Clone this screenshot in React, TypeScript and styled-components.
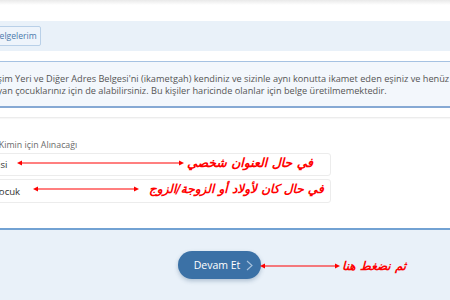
import React from 'react';
import styled, { createGlobalStyle } from 'styled-components';

const GlobalStyle = createGlobalStyle`
  html, body {
    margin: 0;
    padding: 0;
    width: 450px;
    height: 300px;
    overflow: hidden;
    background: #fff;
    font-family: 'Open Sans', 'Liberation Sans', sans-serif;
  }
`;

// the page is scrolled sideways: content starts left of the window
const Content = styled.div`
  margin-left: -60px;
  width: 570px;
`;

const TopShade = styled.div`
  height: 5px;
  background: linear-gradient(#e9e9e9, #fff);
`;

const Toolbar = styled.div`
  margin-top: 16px;
  height: 30px;
  background: #e9f1f9;
  display: flex;
  align-items: center;
  padding-left: 47px;
`;

const GhostButton = styled.button`
  height: 20px;
  padding: 0 3px 0 6px;
  border: 1px solid #b9d0e8;
  border-radius: 2px;
  background: #eef4fb;
  color: #4a79ab;
  font-family: inherit;
  font-size: 8.6px;
  line-height: 18px;
`;

const InfoBox = styled.div`
  margin-top: 10px;
  border-top: 1px solid #a6c2e2;
  border-bottom: 2px solid #86a9d4;
  background: #f3f7fc;
  padding: 11px 0 9px 36px;
  color: #555;
  font-size: 9.2px;
  line-height: 12px;
`;

const InfoLine = styled.div`
  white-space: nowrap;
`;

const Divider = styled.div`
  margin-top: 9px;
  height: 1px;
  background: #ececec;
  box-shadow: 0 1px 1px #f6f6f6;
`;

const FormSection = styled.div`
  padding: 20px 0 0 20px;
`;

const FieldLabel = styled.div<{ $indent: number }>`
  padding-left: ${p => p.$indent}px;
  color: #6b6b6b;
  font-size: 8.8px;
  line-height: 14px;
  margin-bottom: 1px;
  white-space: nowrap;
`;

const OptionList = styled.div`
  display: flex;
  flex-direction: column;
  gap: 3px;
  width: 371px;
`;

const OptionRow = styled.div<{ $indent: number; $h: number }>`
  position: relative;
  height: ${p => p.$h}px;
  border: 1px solid #ececec;
  border-radius: 3px;
  box-sizing: border-box;
  display: flex;
  align-items: center;
  padding-left: ${p => p.$indent}px;
  color: #333;
  font-size: 9.6px;
  white-space: nowrap;
`;

const Footer = styled.div`
  margin-top: 25px;
  border-top: 2px solid #72a2d3;
  background: #e9f1f9;
  height: 80px;
  padding: 21px 0 0 238px;
  position: relative;
`;

const PrimaryButton = styled.button`
  width: 83px;
  height: 28px;
  border: none;
  border-radius: 14px;
  background: #3b71a6;
  box-shadow: 0 2px 4px rgba(40, 80, 120, 0.3);
  color: #fff;
  font-family: inherit;
  font-size: 10.5px;
  display: flex;
  align-items: center;
  justify-content: center;
  gap: 6px;
  padding: 0 0 0 8px;
`;

const Note = styled.div<{ $left: number; $top: number; $gap: number }>`
  position: absolute;
  left: ${p => p.$left}px;
  top: ${p => p.$top}px;
  display: flex;
  align-items: center;
  gap: ${p => p.$gap}px;
`;

const NoteText = styled.span<{ $size: number }>`
  direction: rtl;
  color: #f00;
  font-family: 'DejaVu Sans', sans-serif;
  font-weight: bold;
  font-style: italic;
  font-size: ${p => p.$size}px;
  white-space: nowrap;
`;

const Arrow = ({ width }: { width: number }) => (
  <svg width={width} height="8" viewBox={`0 0 ${width} 8`}>
    <line x1="3" y1="4" x2={width - 3} y2="4" stroke="#f00" strokeWidth="1.2" />
    <path d="M0 4 L5 1.5 L5 6.5 Z" fill="#f00" />
    <path d={`M${width} 4 L${width - 5} 1.5 L${width - 5} 6.5 Z`} fill="#f00" />
  </svg>
);

const Chevron = () => (
  <svg width="7" height="11" viewBox="0 0 7 11">
    <path d="M1 1 L6 5.5 L1 10" fill="none" stroke="#a9c3de" strokeWidth="1.1" />
  </svg>
);

export default function App() {
  return (
    <>
      <GlobalStyle />
      <Content>
        <TopShade />
        <Toolbar>
          <GhostButton>Belgelerim</GhostButton>
        </Toolbar>
        <InfoBox>
          <InfoLine>
            Yerleşim Yeri ve Diğer Adres Belgesi'ni (ikametgah) kendiniz ve sizinle aynı konutta ikamet eden eşiniz ve henüz evlenmemiş
          </InfoLine>
          <InfoLine>
            olmayan çocuklarınız için de alabilirsiniz. Bu kişiler haricinde olanlar için belge üretilmemektedir.
          </InfoLine>
        </InfoBox>
        <Divider />
        <FormSection>
          <FieldLabel $indent={1}>Belgenin Kimin için Alınacağı</FieldLabel>
          <OptionList>
            <OptionRow $indent={14} $h={23}>
              Kendisi
              <Note $left={56} $top={1} $gap={3}>
                <Arrow width={167} />
                <NoteText $size={12.5}>في حال العنوان شخصي</NoteText>
              </Note>
            </OptionRow>
            <OptionRow $indent={11} $h={24}>
              Eşi / Çocuk
              <Note $left={72} $top={2} $gap={10}>
                <Arrow width={106} />
                <NoteText $size={12.1}>في حال كان لأولاد أو الزوجة/الزوج</NoteText>
              </Note>
            </OptionRow>
          </OptionList>
        </FormSection>
        <Footer>
          <PrimaryButton>
            Devam Et <Chevron />
          </PrimaryButton>
          <Note $left={320} $top={29} $gap={2}>
            <Arrow width={80} />
            <NoteText $size={12}>ثم نضغط هنا</NoteText>
          </Note>
        </Footer>
      </Content>
    </>
  );
}
